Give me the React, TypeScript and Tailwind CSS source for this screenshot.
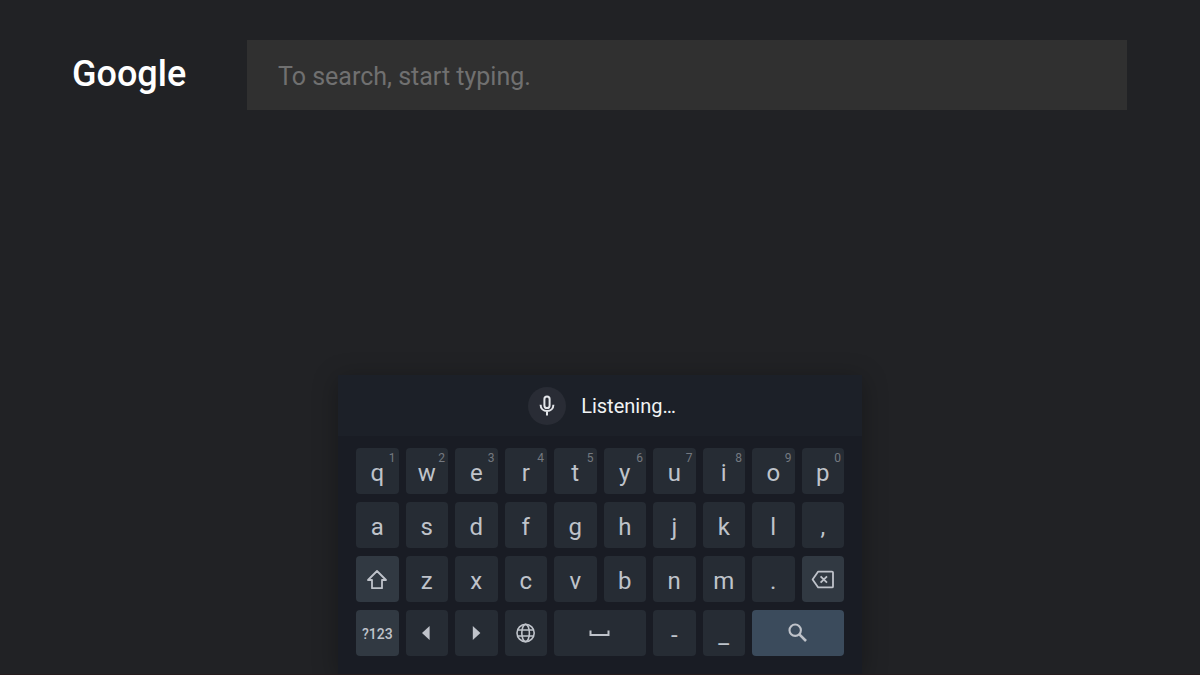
import React, { useState } from 'react';

type KeyDef = {
  label: string;
  text?: string;
  hint?: string;
  icon?: React.ReactNode;
  variant?: 'normal' | 'small' | 'action' | 'search';
  wide?: boolean;
};

const ShiftIcon = () => (
  <svg className="w-6 h-6" viewBox="0 0 24 24" fill="none" stroke="currentColor" strokeWidth="1.8">
    <path strokeLinejoin="round" d="M12 4L3 13H7V21.2H17V13H21Z" />
  </svg>
);

const BackspaceIcon = () => (
  <svg className="w-6 h-6" viewBox="0 0 24 24" fill="none" stroke="currentColor" strokeWidth="1.8">
    <path strokeLinejoin="round" d="M7.2 4.6H21C21.7 4.6 22 5 22 5.6V19.4C22 20 21.7 20.4 21 20.4H7.2L1.6 12.5Z" />
    <path d="M9.6 9.3L16 15.7M16 9.3L9.6 15.7" />
  </svg>
);

const LeftIcon = () => (
  <svg className="w-6 h-6" viewBox="0 0 24 24" fill="currentColor">
    <path d="M14.6 5V19L7 12Z" />
  </svg>
);

const RightIcon = () => (
  <svg className="w-6 h-6" viewBox="0 0 24 24" fill="currentColor">
    <path d="M8.8 5V19L16.4 12Z" />
  </svg>
);

const GlobeIcon = () => (
  <svg className="w-6 h-6" viewBox="0 0 24 24" fill="none" stroke="currentColor" strokeWidth="1.6">
    <circle cx="11.6" cy="12" r="8.6" />
    <ellipse cx="11.6" cy="12" rx="3.8" ry="8.6" />
    <path d="M3.8 9H19.4M3.8 15H19.4" />
  </svg>
);

const SpaceIcon = () => (
  <svg className="w-6 h-6" viewBox="0 0 24 24" fill="none" stroke="currentColor" strokeWidth="2">
    <path d="M2.5 9.5V14H20.5V9.5" />
  </svg>
);

const SearchIcon = () => (
  <svg className="w-6 h-6" viewBox="0 0 24 24" fill="none" stroke="currentColor" strokeWidth="2.1">
    <circle cx="9.2" cy="9.2" r="5.7" />
    <path strokeWidth="2.6" d="M13.4 13.4L20 20" />
  </svg>
);

const MicIcon = () => (
  <svg className="w-6 h-6" viewBox="0 0 24 24" fill="none" stroke="currentColor" strokeWidth="2">
    <rect x="9.4" y="2.4" width="5.2" height="11.6" rx="2.6" />
    <path d="M5.6 10.8C5.6 14.6 8.4 17 12 17S18.4 14.6 18.4 10.8M12 17V21.4" />
  </svg>
);

const letters = (row: string): KeyDef[] => row.split('').map(text => ({ label: text, text }));

const keys: KeyDef[] = [
  ...letters('qwertyuiop').map((key, i) => ({ ...key, hint: String((i + 1) % 10) })),
  ...letters('asdfghjkl,'),
  { label: 'Shift', icon: <ShiftIcon />, variant: 'action' },
  ...letters('zxcvbnm.'),
  { label: 'Backspace', icon: <BackspaceIcon />, variant: 'action' },
  { label: 'Numbers and symbols', text: '?123', variant: 'small' },
  { label: 'Move left', icon: <LeftIcon /> },
  { label: 'Move right', icon: <RightIcon /> },
  { label: 'Language', icon: <GlobeIcon /> },
  { label: 'Space', icon: <SpaceIcon />, wide: true },
  ...letters('-_'),
  { label: 'Search', icon: <SearchIcon />, variant: 'search', wide: true },
];

const variants = {
  normal: 'bg-[#262c34] text-2xl',
  small: 'bg-[#313942] text-sm font-medium',
  action: 'bg-[#313942]',
  search: 'bg-[#3b4b5c]',
};

const Key: React.FC<{ def: KeyDef; onPress: () => void }> = ({ def, onPress }) => (
  <button
    type="button"
    aria-label={def.label}
    onClick={onPress}
    className={`relative flex items-center justify-center h-[46px] rounded text-[#bfc3ca] ${variants[def.variant ?? 'normal']} ${def.wide ? 'col-span-2' : ''}`}
  >
    {def.hint && (
      <span className="absolute top-0.5 right-[3px] text-xs text-[#747980]">{def.hint}</span>
    )}
    {def.icon ?? <span className={def.variant === 'small' ? 'pt-0.5' : 'pt-1'}>{def.text}</span>}
  </button>
);

export default function App() {
  const [query, setQuery] = useState('');

  const press = (def: KeyDef) => {
    if (def.label === 'Backspace') setQuery(q => q.slice(0, -1));
    else if (def.label === 'Space') setQuery(q => q + ' ');
    else if (def.text && def.variant !== 'small') setQuery(q => q + def.text);
  };

  return (
    <div className="flex flex-col justify-between min-h-screen overflow-hidden bg-[#212225] border-b border-[#251c1e] font-[Roboto,sans-serif]">
      <header className="flex items-center gap-[62px] pt-10 pl-[72px] pr-[73px]">
        <h1 className="w-[113px] pb-0.5 text-4xl font-medium text-white">Google</h1>
        <input
          type="text"
          aria-label="Search"
          placeholder="To search, start typing."
          value={query}
          onChange={e => setQuery(e.target.value)}
          className="flex-1 min-w-0 h-[70px] px-[31px] pt-0.5 bg-[#303030] text-[25px] text-white placeholder:text-[#707070] outline-none"
        />
      </header>

      <section
        aria-label="Keyboard"
        className="w-full max-w-[524px] mx-auto bg-[#191c24] shadow-[0_4px_24px_rgba(0,0,0,0.3)]"
      >
        <div className="flex items-center justify-center gap-[15px] h-[61px] pl-1 bg-[#1c2028]">
          <button
            type="button"
            aria-label="Voice input"
            className="flex items-center justify-center w-[38px] h-[38px] rounded-full bg-[#292c35] text-[#e4e6ea]"
          >
            <MicIcon />
          </button>
          <p className="text-xl text-[#f1f3f4]">Listening…</p>
        </div>
        <div className="grid grid-cols-10 gap-x-[7px] gap-y-2 px-[18px] pt-3 pb-[18px]">
          {keys.map(def => (
            <Key key={def.label} def={def} onPress={() => press(def)} />
          ))}
        </div>
      </section>
    </div>
  );
}
